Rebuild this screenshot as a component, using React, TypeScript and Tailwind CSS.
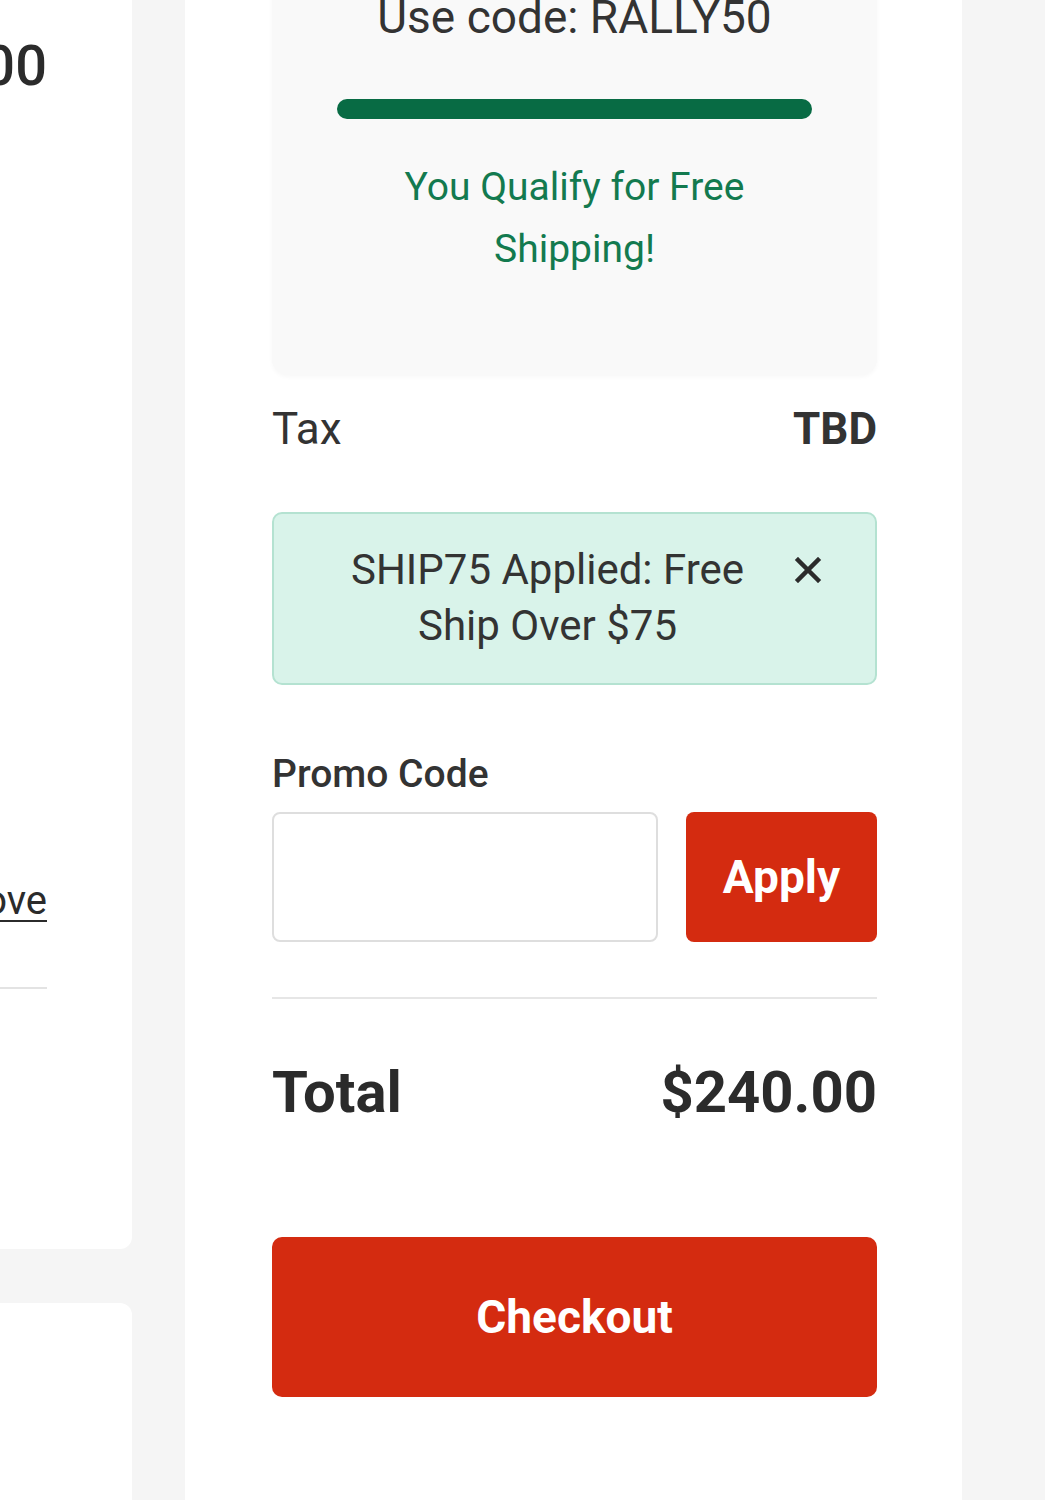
import { useState } from "react";

const font = { fontFamily: "Roboto, 'Liberation Sans', Arial, sans-serif" };

function LeftColumn() {
  return (
    <div className="-ml-[300px] flex w-[432px] shrink-0 flex-col gap-[54px]">
      <div className="-mt-[40px] flex h-[1289px] shrink-0 flex-col rounded-br-[12px] rounded-tr-[12px] bg-white pr-[85px]">
        <div className="mt-[73px] text-right text-[56px] font-medium leading-[66px] text-[#2b2b2b]">$120.00</div>
        <div className="mt-[774px] text-right text-[40px] leading-[56px] text-[#2b2b2b]">
          <span className="underline decoration-2 underline-offset-[6px]">Remove</span>
        </div>
        <div className="mt-[58px] h-[2px] bg-[#e3e3e3]" />
      </div>
      <div className="h-[400px] shrink-0 rounded-tr-[12px] bg-white" />
    </div>
  );
}

function PromoBanner() {
  return (
    <div className="-mt-[40px] rounded-b-[16px] rounded-t-[16px] bg-[#f9f9f9] px-[65px] pb-[95px] pt-[24px] shadow-[0_2px_4px_rgba(0,0,0,0.03)]">
      <p className="text-center text-[46px] leading-[66px] text-[#333]">Use code: RALLY50</p>
      <div className="mt-[49px] h-[20px] rounded-full bg-[#086b44]" />
      <p className="mt-[37px] text-center text-[39px] leading-[62px] text-[#137a4f]">
        You Qualify for Free Shipping!
      </p>
    </div>
  );
}

function AppliedCode({ onRemove }: { onRemove: () => void }) {
  return (
    <div className="mt-[51px] flex items-start rounded-[10px] border-2 border-[#b4e2d1] bg-[#d9f3ea] pb-[29px] pl-[47px] pr-[53px] pt-[28px]">
      <p className="flex-1 text-center text-[42px] leading-[56px] text-[#333]">SHIP75 Applied: Free Ship Over $75</p>
      <button onClick={onRemove} className="ml-[20px] flex h-[56px] w-[28px] items-center justify-center text-[#2b2b2b]">
        <svg width="28" height="26" viewBox="0 0 28 26" fill="none" stroke="currentColor" strokeWidth="4.5" strokeLinecap="square">
          <path d="M4 3 L24 23 M24 3 L4 23" />
        </svg>
      </button>
    </div>
  );
}

export default function App() {
  const [applied, setApplied] = useState(true);
  const [code, setCode] = useState("");

  return (
    <div className="flex h-[1500px] gap-[53px] overflow-hidden bg-[#f5f5f5]" style={font}>
      <LeftColumn />
      <div className="w-[777px] shrink-0 bg-white px-[85px] pl-[87px]">
        <PromoBanner />

        <div className="mt-[22px] flex items-center justify-between text-[44px] leading-[64px] text-[#333]">
          <span>Tax</span>
          <span className="font-bold">TBD</span>
        </div>

        {applied && <AppliedCode onRemove={() => setApplied(false)} />}

        <label className="mt-[66px] block text-[39px] font-medium leading-[46px] text-[#333]">Promo Code</label>
        <div className="mt-[15px] flex gap-[28px]">
          <input
            value={code}
            onChange={(e) => setCode(e.target.value)}
            className="h-[130px] w-[386px] rounded-[8px] border-2 border-[#dedede] bg-white px-4 text-[40px] outline-none"
          />
          <button className="h-[130px] flex-1 rounded-[8px] bg-[#d42b10] text-[46px] font-bold text-white">Apply</button>
        </div>

        <div className="mt-[55px] h-[2px] bg-[#e6e6e6]" />

        <div className="mt-[58px] flex items-center justify-between text-[58px] font-bold leading-[70px] text-[#2b2b2b]">
          <span>Total</span>
          <span>$240.00</span>
        </div>

        <button className="mt-[110px] h-[160px] w-full rounded-[10px] bg-[#d42b10] text-[46px] font-bold text-white">
          Checkout
        </button>
      </div>
    </div>
  );
}
